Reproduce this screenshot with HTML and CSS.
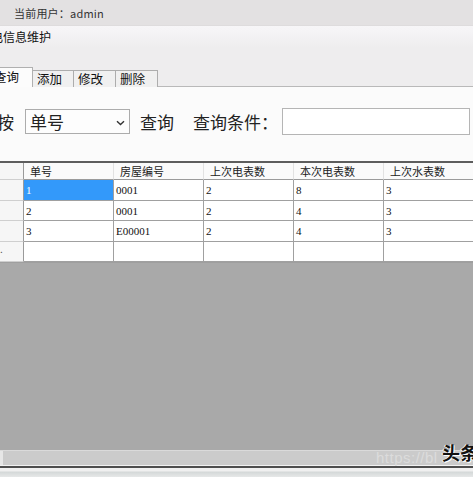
FILE: index.html
```html
<!DOCTYPE html>
<html lang="zh">
<head>
<meta charset="utf-8">
<title>信息维护</title>
<link rel="stylesheet" href="styles.css">
</head>
<body>
<div class="app">
  <div class="topbar"><span class="user">当前用户：admin</span></div>
  <div class="panel">
    <div class="title"><span class="cut">电</span>信息维护</div>
    <div class="tabs">
      <div class="tab active">查询</div>
      <div class="tab">添加</div>
      <div class="tab">修改</div>
      <div class="tab">删除</div>
    </div>
  </div>
  <div class="content">
    <div class="query">
      <span class="lbl by">按</span>
      <div class="combo"><span>单号</span>
        <svg class="chev" width="9" height="6" viewBox="0 0 9 6"><path d="M1 1.2 L4.5 4.5 L8 1.2" fill="none" stroke="#333" stroke-width="1.4"/></svg>
      </div>
      <span class="lbl q">查询</span>
      <span class="lbl cond">查询条件：</span>
      <div class="input"></div>
    </div>
  </div>
  <div class="grid">
    <div class="hd rh"></div>
    <div class="hd">单号</div>
    <div class="hd">房屋编号</div>
    <div class="hd">上次电表数</div>
    <div class="hd">本次电表数</div>
    <div class="hd">上次水表数</div>

    <div class="rh"></div>
    <div class="c sel">1</div>
    <div class="c">0001</div>
    <div class="c">2</div>
    <div class="c">8</div>
    <div class="c">3</div>

    <div class="rh"></div>
    <div class="c">2</div>
    <div class="c">0001</div>
    <div class="c">2</div>
    <div class="c">4</div>
    <div class="c">3</div>

    <div class="rh"></div>
    <div class="c">3</div>
    <div class="c">E00001</div>
    <div class="c">2</div>
    <div class="c">4</div>
    <div class="c">3</div>

    <div class="rh star">.</div>
    <div class="c"></div>
    <div class="c"></div>
    <div class="c"></div>
    <div class="c"></div>
    <div class="c"></div>
  </div>
  <div class="empty"></div>
  <div class="hscroll">
    <div class="thumb"></div>
    <span class="wm">https://bl</span>
    <span class="wm2">头条</span>
  </div>
  <div class="bottomline"></div>
  <div class="status"></div>
</div>
</body>
</html>
```

FILE: styles.css
```css
html, body {
  margin: 0;
  padding: 0;
  width: 473px;
  height: 477px;
  overflow: hidden;
  background: #a9a9a9;
}
.app {
  width: 473px;
  height: 477px;
  display: flex;
  flex-direction: column;
  overflow: hidden;
  font-family: "Noto Sans CJK SC", "Liberation Sans", sans-serif;
  color: #222;
  white-space: nowrap;
}
.topbar {
  height: 26px;
  flex-shrink: 0;
  background: #e3e1e2;
  display: flex;
  align-items: center;
  padding-left: 14px;
  box-sizing: border-box;
  border-bottom: 1px solid #dedcdd;
}
.user {
  font-size: 11px;
  color: #333;
  letter-spacing: 0.2px;
}
.panel {
  height: 61px;
  flex-shrink: 0;
  box-sizing: border-box;
  background: linear-gradient(#f7f6f8 0px, #f2f1f3 12px, #eeedee 22px, #eeedee 100%);
  display: flex;
  flex-direction: column;
  justify-content: space-between;
  border-bottom: 1px solid #b9b9b9;
}
.title {
  font-size: 12px;
  line-height: 18px;
  padding-top: 2px;
  margin-left: -9px;
  color: #111;
}
.tabs {
  display: flex;
  align-items: flex-end;
  height: 20px;
  margin-bottom: -1px;
}
.tab {
  flex-shrink: 0;
  height: 17px;
  box-sizing: border-box;
  border: 1px solid #adadad;
  border-bottom: none;
  background: #f0f0f0;
  font-size: 12.5px;
  line-height: 16px;
  padding-left: 4px;
  width: 43px;
  margin-left: -1px;
  color: #111;
}
.tab:nth-child(2) { width: 42px; }
.tab.active {
  height: 20px;
  width: 34px;
  margin-left: -1px;
  background: #fcfcfc;
  padding-left: 0;
  text-indent: -6px;
  line-height: 18px;
  border-color: #b0b0b0;
  position: relative;
  z-index: 1;
  overflow: hidden;
}
.content {
  height: 74px;
  flex-shrink: 0;
  box-sizing: border-box;
  padding-top: 21px;
  background: #fbfbfb;
}
.query {
  display: flex;
  align-items: center;
  height: 27px;
}
.lbl {
  flex-shrink: 0;
  font-size: 17px;
  color: #222;
  line-height: 22px;
}
.by {
  margin-left: -3px;
  width: 28px;
}
.combo {
  flex-shrink: 0;
  width: 105px;
  height: 25px;
  box-sizing: border-box;
  border: 1px solid #acacac;
  background: #fdfdfd;
  display: flex;
  align-items: center;
  justify-content: space-between;
  padding: 0 4px 0 4px;
  font-size: 17px;
}
.chev { margin-top: 2px; }
.q { margin-left: 10px; }
.cond { margin-left: 19px; }
.input {
  flex-shrink: 0;
  margin-left: 4px;
  width: 188px;
  height: 27px;
  box-sizing: border-box;
  border: 1px solid #b5b5b5;
  background: #ffffff;
}
.grid {
  flex-shrink: 0;
  display: grid;
  grid-template-columns: 24px repeat(5, 90px);
  grid-template-rows: 17px repeat(4, 20.5px);
  border-top: 2px solid #5d5d5d;
  background: #fff;
  width: 480px;
}
.hd {
  background: #fafafa;
  border-right: 1px solid #e2e2e2;
  font-size: 11px;
  line-height: 16px;
  padding-left: 6px;
  color: #222;
  border-bottom: 1px solid #9a9a9a;
}
.hd.rh { padding-left: 0; border-right: 1px solid #9a9a9a; }
.rh {
  background: #f6f6f6;
  border-right: 1px solid #9a9a9a;
  border-bottom: 1px solid #cfcfcf;
}
.star {
  font-size: 10px;
  line-height: 14px;
  color: #555;
  padding-left: 0;
}
.c {
  border-right: 1px solid #a0a0a0;
  border-bottom: 1px solid #a0a0a0;
  font-family: "Liberation Serif", "Noto Sans CJK SC", serif;
  font-size: 11px;
  line-height: 20px;
  padding-left: 2px;
  color: #111;
  box-sizing: border-box;
}
.c.sel {
  background: #3399fa;
  color: #fff;
}
.empty {
  flex: 1;
  background: #a9a9a9;
  border-top: 1px solid #9f9f9f;
}
.hscroll {
  flex-shrink: 0;
  height: 16px;
  box-sizing: border-box;
  background: #cbcbcb;
  border-top: 1px solid #dadada;
  border-bottom: 1px solid #f2f2f2;
  position: relative;
  display: flex;
}
.thumb {
  width: 3px;
  background: #e6e6e6;
}
.wm {
  position: absolute;
  left: 376px;
  top: -2px;
  font-family: "Liberation Sans", sans-serif;
  font-size: 15px;
  color: #dcdcdc;
  letter-spacing: 0.5px;
}
.wm2 {
  position: absolute;
  left: 442px;
  top: -10px;
  font-size: 18px;
  line-height: 22px;
  font-weight: bold;
  color: #111;
  text-shadow: 1px 1px 0 #fff, -1px 0 0 #fff;
}
.bottomline {
  flex-shrink: 0;
  height: 2px;
  background: #4e4e4e;
}
.status {
  flex-shrink: 0;
  height: 9px;
  background: linear-gradient(#f0f0f0 0, #f0f0f0 3px, #d4d8d8 4px, #e6e8e8 100%);
}
```
